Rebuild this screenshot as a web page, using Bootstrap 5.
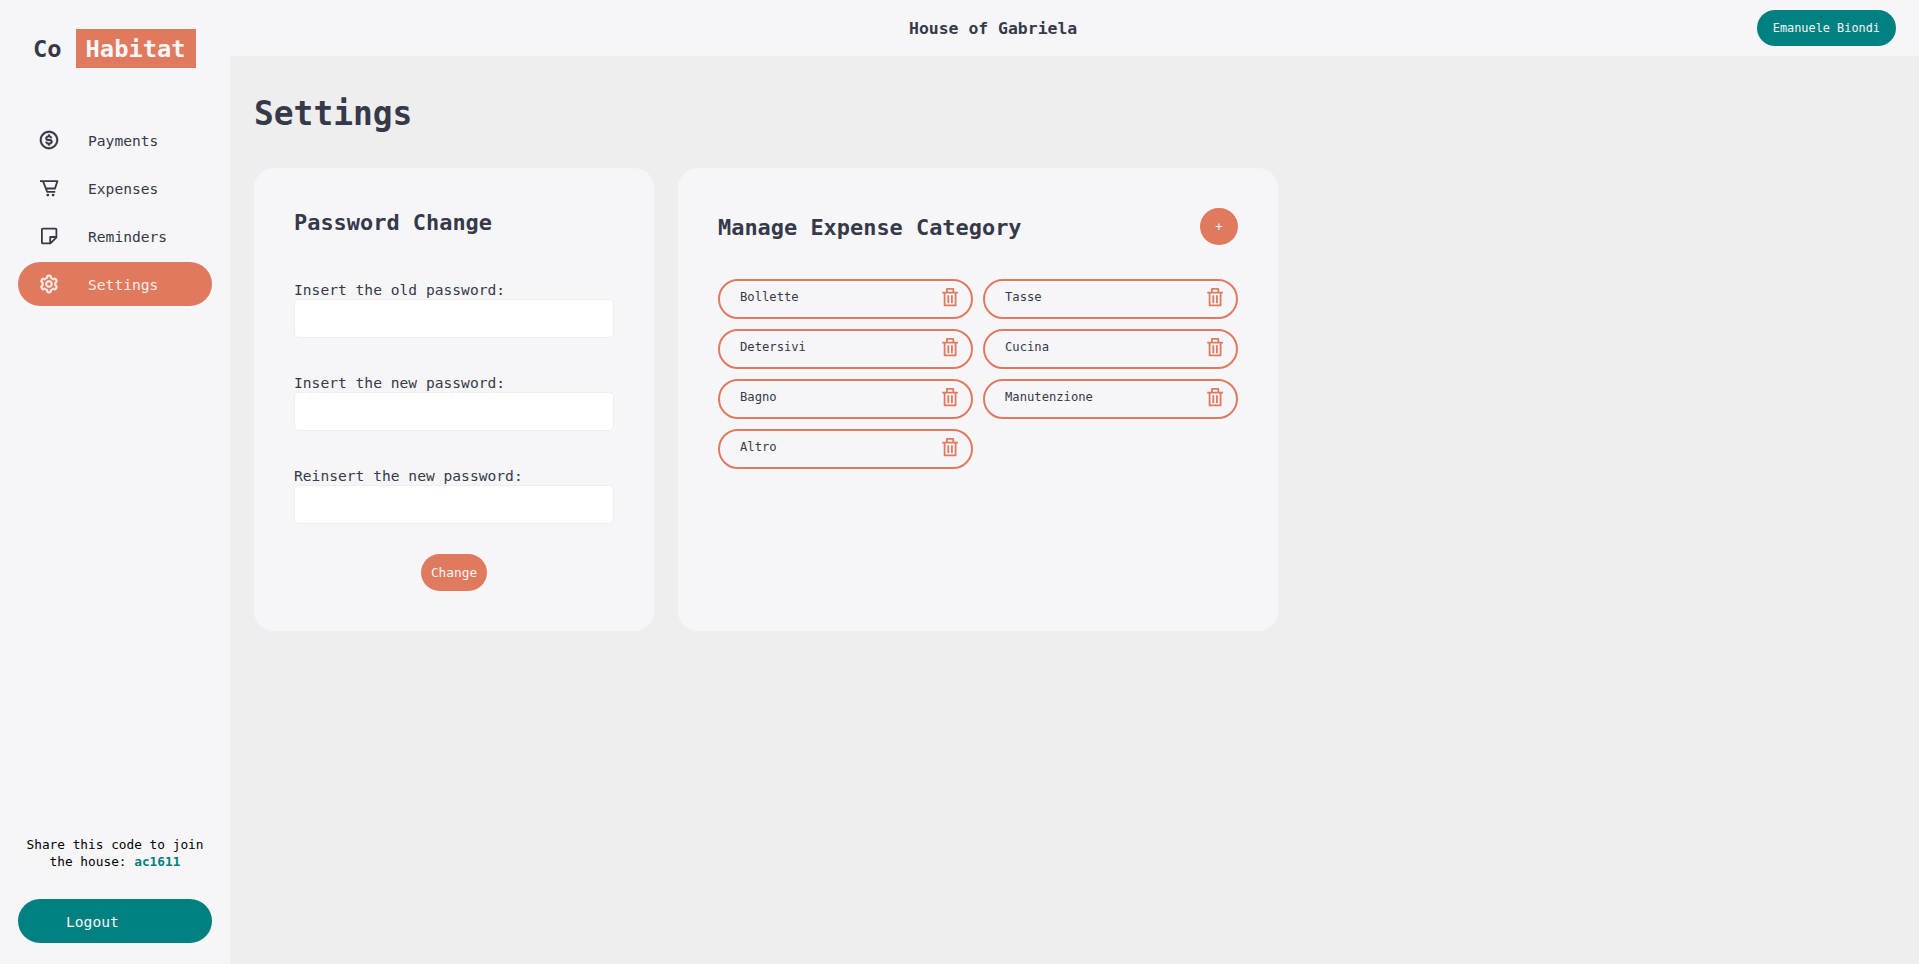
<!DOCTYPE html>
<html lang="en">
<head>
<meta charset="utf-8">
<meta name="viewport" content="width=device-width, initial-scale=1">
<title>CoHabitat - Settings</title>
<link href="https://cdn.jsdelivr.net/npm/bootstrap@5.3.0/dist/css/bootstrap.min.css" rel="stylesheet">
<style>
:root { --coral: #e07a5f; --teal: #008080; --panel: #f6f6f9; --ink: #363949; }
body { font-family: "DejaVu Sans Mono", monospace; font-size: 14.62px; color: var(--ink); background: #eee; height: 964px; overflow: hidden; }
svg { width: 22px; height: 22px; fill: currentColor; display: block; flex: none; }
.line-icon { fill: none; stroke: currentColor; stroke-width: 1.8; stroke-linejoin: round; }
.sidebar { width: 230px; background: var(--panel); padding: 29px 18px 21px; }
.brand { font-size: 23.74px; line-height: 39px; font-weight: 700; padding-left: 15px; gap: 14px; margin-bottom: 50px; }
.brand span { padding-top: 1px; height: 39px; }
.brand-box { background: var(--coral); color: var(--panel); width: 120px; }
.side-nav { gap: 4px; }
.side-nav .nav-link { height: 44px; padding: 0 20px; border-radius: 22px; color: var(--ink); gap: 28px; }
.side-nav .nav-link span { padding-top: 2px; line-height: 20px; }
.side-nav .nav-link.active { background: var(--coral); color: #fbeae6; }
.invite { font-size: 12.79px; line-height: 17px; color: #000; margin-bottom: 29px; }
.invite b { color: var(--teal); }
.logout { height: 44px; border-radius: 22px; background: var(--teal); color: var(--panel); padding: 2px 48px 0; text-decoration: none; }
.topbar { height: 56px; background: var(--panel); padding: 0 23px 0 679px; }
.house { font-size: 16.45px; font-weight: 700; padding-top: 2px; }
.user { height: 36px; padding: 2px 16px 0; border-radius: 18px; background: var(--teal); color: var(--panel); font-size: 11.88px; }
main { padding: 38px 24px; }
h1 { font-size: 32.89px; line-height: 40px; font-weight: 700; margin-bottom: 34px; }
h2 { font-size: 21.93px; font-weight: 700; margin: 0; }
.panel { background: var(--panel); border-radius: 20px; padding: 40px; height: 463px; }
.panel-pass { width: 400px; }
.panel-cat { width: 600px; }
.panel-pass h2 { line-height: 28px; margin-bottom: 43px; padding-top: 1px; }
.panel-cat h2 { padding-top: 3px; }
.field { margin-bottom: 35px; }
.field label { display: block; line-height: 19px; }
.field .form-control { height: 39px; border: 1px solid #eee; border-radius: 5px; background: #fff; }
.btn-coral { --bs-btn-color: #f6f6f9; --bs-btn-bg: #e07a5f; --bs-btn-hover-bg: #cf6b51; --bs-btn-hover-color: #fff; border: 0; height: 37px; padding: 0; border-radius: 20px; font-size: 12.79px; }
.btn-change { width: 66px; margin-top: -5px; }
.btn-plus { width: 38px; font-size: 12.18px; padding-top: 2px; }
.cat-grid { display: grid; grid-template-columns: 255px 255px; gap: 10px; margin-top: 34px; }
.cat-item { height: 40px; border: 2px solid var(--coral); border-radius: 20px; padding: 5px 10px 0 20px; font-size: 12.18px; }
.cat-item span { line-height: 22px; }
.cat-item svg { color: var(--coral); }
</style>
</head>
<body>
<svg class="d-none">
  <symbol id="i-trash" viewBox="0 0 22 22"><path d="M3.2 6.6H19M7.9 6.3V2.9h6.4v3.4M5.6 6.6v12.8h11V6.6M9.3 9.2v8M12.9 9.2v8"/></symbol>
</svg>
<div class="d-flex h-100">
  <aside class="sidebar d-flex flex-column flex-shrink-0">
    <div class="brand d-flex"><span>Co</span><span class="brand-box text-center">Habitat</span></div>
    <nav class="side-nav nav flex-column">
      <a class="nav-link d-flex align-items-center" href="#"><svg viewBox="0 0 24 24" stroke="currentColor" stroke-width=".3"><path d="M12 2C6.486 2 2 6.486 2 12s4.486 10 10 10 10-4.486 10-10S17.514 2 12 2zm0 18c-4.411 0-8-3.589-8-8s3.589-8 8-8 8 3.589 8 8-3.589 8-8 8z"/><path d="M12 11c-2 0-2-.63-2-1s.7-1 2-1 1.39.64 1.4 1h2A3 3 0 0 0 13 7.12V6h-2v1.09C9 7.42 8 8.71 8 10c0 1.12.52 3 4 3 2 0 2 .68 2 1s-.62 1-2 1c-1.84 0-2-.86-2-1H8c0 .92.66 2.55 3 2.92V18h2v-1.08c2-.34 3-1.63 3-2.92 0-1.12-.52-3-4-3z"/></svg><span>Payments</span></a>
      <a class="nav-link d-flex align-items-center" href="#"><svg class="line-icon" viewBox="0 0 22 22"><path d="M2 4.1H19.4L17 11.5H8M5 4.1 9.1 14.8H17.2"/><circle cx="9.8" cy="18.1" r="1.4" fill="currentColor" stroke="none"/><circle cx="15.1" cy="18.1" r="1.4" fill="currentColor" stroke="none"/></svg><span>Expenses</span></a>
      <a class="nav-link d-flex align-items-center" href="#"><svg class="line-icon" viewBox="0 0 22 22"><path d="M4.8 3.6H17.5a.9.9 0 0 1 .9.9V12.4L12.4 18.4H4.8a.9.9 0 0 1-.9-.9V4.5a.9.9 0 0 1 .9-.9zM18.4 12H12.2V18.4"/></svg><span>Reminders</span></a>
      <a class="nav-link active d-flex align-items-center" href="#"><svg viewBox="0 0 24 24" stroke="currentColor" stroke-width=".3"><path d="M12 16c2.206 0 4-1.794 4-4s-1.794-4-4-4-4 1.794-4 4 1.794 4 4 4zm0-6c1.084 0 2 .916 2 2s-.916 2-2 2-2-.916-2-2 .916-2 2-2z"/><path d="m2.845 16.136 1 1.73c.531.917 1.809 1.261 2.73.73l.529-.306A8.1 8.1 0 0 0 9 19.402V20c0 1.103.897 2 2 2h2c1.103 0 2-.897 2-2v-.598a8.132 8.132 0 0 0 1.896-1.111l.529.306c.923.53 2.198.188 2.731-.731l.999-1.729a2.001 2.001 0 0 0-.731-2.732l-.505-.292a7.718 7.718 0 0 0 0-2.224l.505-.292a2.002 2.002 0 0 0 .731-2.732l-.999-1.729c-.531-.92-1.808-1.265-2.731-.732l-.529.306A8.1 8.1 0 0 0 15 4.598V4c0-1.103-.897-2-2-2h-2c-1.103 0-2 .897-2 2v.598a8.132 8.132 0 0 0-1.896 1.111l-.529-.306c-.924-.531-2.2-.187-2.731.732l-.999 1.729a2.001 2.001 0 0 0 .731 2.732l.505.292a7.683 7.683 0 0 0 0 2.223l-.505.292a2.003 2.003 0 0 0-.731 2.733zm3.326-2.758A5.703 5.703 0 0 1 6 12c0-.462.058-.926.17-1.378a.999.999 0 0 0-.47-1.108l-1.123-.65.998-1.729 1.145.662a.997.997 0 0 0 1.188-.142 6.071 6.071 0 0 1 2.384-1.399A1 1 0 0 0 11 5.3V4h2v1.3a1 1 0 0 0 .708.956 6.083 6.083 0 0 1 2.384 1.399.999.999 0 0 0 1.188.142l1.144-.661 1 1.729-1.124.649a1 1 0 0 0-.47 1.108c.112.452.17.916.17 1.378 0 .461-.058.925-.171 1.378a1 1 0 0 0 .471 1.108l1.123.649-.998 1.729-1.145-.661a.996.996 0 0 0-1.188.142 6.071 6.071 0 0 1-2.384 1.399A1 1 0 0 0 13 18.7l.002 1.3H11v-1.3a1 1 0 0 0-.708-.956 6.083 6.083 0 0 1-2.384-1.399.992.992 0 0 0-1.188-.141l-1.144.662-1-1.729 1.124-.651a1 1 0 0 0 .471-1.108z"/></svg><span>Settings</span></a>
    </nav>
    <div class="invite mt-auto text-center text-nowrap">Share this code to join<br>the house: <b>ac1611</b></div>
    <a class="logout d-flex align-items-center" href="#">Logout</a>
  </aside>
  <div class="flex-grow-1">
    <header class="topbar d-flex align-items-center justify-content-between">
      <div class="house">House of Gabriela</div>
      <div class="user d-flex align-items-center">Emanuele Biondi</div>
    </header>
    <main>
      <h1>Settings</h1>
      <div class="d-flex gap-4">
        <section class="panel panel-pass">
          <h2>Password Change</h2>
          <form>
            <div class="field"><label for="old">Insert the old password:</label><input id="old" type="password" class="form-control"></div>
            <div class="field"><label for="new">Insert the new password:</label><input id="new" type="password" class="form-control"></div>
            <div class="field"><label for="again">Reinsert the new password:</label><input id="again" type="password" class="form-control"></div>
            <div class="text-center"><button type="button" class="btn btn-coral btn-change">Change</button></div>
          </form>
        </section>
        <section class="panel panel-cat">
          <div class="d-flex justify-content-between align-items-center"><h2>Manage Expense Category</h2><button type="button" class="btn btn-coral btn-plus">+</button></div>
          <div class="cat-grid">
            <div class="cat-item d-flex justify-content-between"><span>Bollette</span><svg class="line-icon"><use href="#i-trash"/></svg></div>
            <div class="cat-item d-flex justify-content-between"><span>Tasse</span><svg class="line-icon"><use href="#i-trash"/></svg></div>
            <div class="cat-item d-flex justify-content-between"><span>Detersivi</span><svg class="line-icon"><use href="#i-trash"/></svg></div>
            <div class="cat-item d-flex justify-content-between"><span>Cucina</span><svg class="line-icon"><use href="#i-trash"/></svg></div>
            <div class="cat-item d-flex justify-content-between"><span>Bagno</span><svg class="line-icon"><use href="#i-trash"/></svg></div>
            <div class="cat-item d-flex justify-content-between"><span>Manutenzione</span><svg class="line-icon"><use href="#i-trash"/></svg></div>
            <div class="cat-item d-flex justify-content-between"><span>Altro</span><svg class="line-icon"><use href="#i-trash"/></svg></div>
          </div>
        </section>
      </div>
    </main>
  </div>
</div>
<script src="https://cdn.jsdelivr.net/npm/bootstrap@5.3.0/dist/js/bootstrap.bundle.min.js"></script>
</body>
</html>
